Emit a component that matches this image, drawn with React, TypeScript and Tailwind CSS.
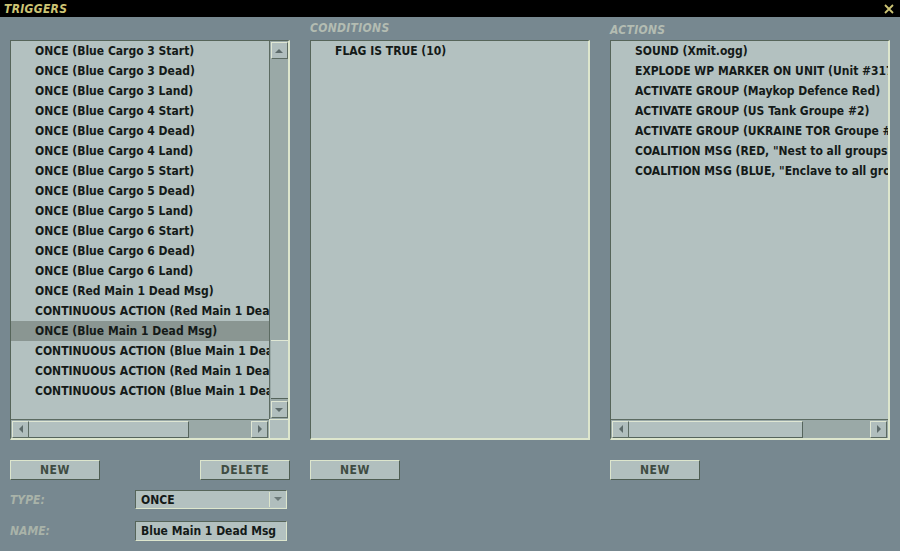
const FONT = { fontFamily: '"DejaVu Sans Condensed", "DejaVu Sans", "Liberation Sans", sans-serif' };

const triggers = [
  "ONCE (Blue Cargo 3 Start)",
  "ONCE (Blue Cargo 3 Dead)",
  "ONCE (Blue Cargo 3 Land)",
  "ONCE (Blue Cargo 4 Start)",
  "ONCE (Blue Cargo 4 Dead)",
  "ONCE (Blue Cargo 4 Land)",
  "ONCE (Blue Cargo 5 Start)",
  "ONCE (Blue Cargo 5 Dead)",
  "ONCE (Blue Cargo 5 Land)",
  "ONCE (Blue Cargo 6 Start)",
  "ONCE (Blue Cargo 6 Dead)",
  "ONCE (Blue Cargo 6 Land)",
  "ONCE (Red Main 1 Dead Msg)",
  "CONTINUOUS ACTION (Red Main 1 Dead)",
  "ONCE (Blue Main 1 Dead Msg)",
  "CONTINUOUS ACTION (Blue Main 1 Dead)",
  "CONTINUOUS ACTION (Red Main 1 Dead)",
  "CONTINUOUS ACTION (Blue Main 1 Dead)",
];

const actions = [
  "SOUND (Xmit.ogg)",
  "EXPLODE WP MARKER ON UNIT (Unit #317)",
  "ACTIVATE GROUP (Maykop Defence Red)",
  "ACTIVATE GROUP (US Tank Groupe #2)",
  "ACTIVATE GROUP (UKRAINE TOR Groupe #1)",
  'COALITION MSG (RED, "Nest to all groups")',
  'COALITION MSG (BLUE, "Enclave to all groups")',
];

function Row({ text, selected }: { text: string; selected?: boolean }) {
  return (
    <div
      className={`h-5 shrink-0 flex items-center pl-6 whitespace-nowrap text-[12px] font-bold text-[#141a18] ${
        selected ? "bg-[#8a9692]" : ""
      }`}
    >
      {text}
    </div>
  );
}

function Arrow({ dir }: { dir: "up" | "down" | "left" | "right" }) {
  const pts = {
    up: "1,6 5,2 9,6",
    down: "1,2 5,6 9,2",
    left: "6,1 2,5 6,9",
    right: "2,1 6,5 2,9",
  }[dir];
  const vertical = dir === "up" || dir === "down";
  return (
    <svg width={vertical ? 10 : 8} height={vertical ? 8 : 10} viewBox={vertical ? "0 0 10 8" : "0 0 8 10"}>
      <polygon points={pts} fill="#5d6b6a" />
    </svg>
  );
}

function ScrollBtn({ dir }: { dir: "up" | "down" | "left" | "right" }) {
  return (
    <div className="w-[17px] h-[17px] shrink-0 flex items-center justify-center bg-[#b0bebd] border border-t-[#dfe7d4] border-l-[#dfe7d4] border-b-[#5c6b62] border-r-[#5c6b62]">
      <Arrow dir={dir} />
    </div>
  );
}

function HScroll({ thumb, track }: { thumb: number; track: number }) {
  return (
    <div className="h-[19px] flex items-center bg-[#9aa9a7] border-t border-[#5c6b62] px-px">
      <ScrollBtn dir="left" />
      <div className="flex-1 h-[17px] flex">
        <div
          className="h-full bg-[#b2c0bf] border-r border-b border-[#55645c] border-t border-t-[#dfe7d4]"
          style={{ width: thumb }}
        />
        <div style={{ width: track }} />
      </div>
      <ScrollBtn dir="right" />
    </div>
  );
}

function Panel({ children }: { children: React.ReactNode }) {
  return (
    <div className="w-[280px] h-[400px] flex flex-col bg-[#b3c1c0] border-t border-l border-[#56655a] border-b-2 border-r-2 border-b-[#dde6cd] border-r-[#dde6cd] overflow-hidden">
      {children}
    </div>
  );
}

function Heading({ text, offset }: { text: string; offset: string }) {
  return (
    <div className={`h-[23px] flex items-center ${offset} text-[12px] font-bold italic text-[#b3bcb2] tracking-[0.3px]`}>
      {text}
    </div>
  );
}

function Button({ text }: { text: string }) {
  return (
    <div className="w-[90px] h-5 flex items-center justify-center bg-[#b1bfbe] border border-t-[#dde6cd] border-l-[#dde6cd] border-b-[#4e5d52] border-r-[#4e5d52] text-[12px] font-bold text-[#3f4c42] tracking-[0.5px]">
      {text}
    </div>
  );
}

export default function App() {
  return (
    <div className="w-[900px] h-[551px] bg-[#778890] flex flex-col overflow-hidden" style={FONT}>
      <div className="h-[17px] bg-black flex items-center justify-between px-1">
        <span className="text-[12px] font-bold italic text-[#cdc474] tracking-[0.3px]">TRIGGERS</span>
        <svg width="10" height="10" viewBox="0 0 10 10" className="mr-0.5">
          <path d="M1 1 L9 9 M9 1 L1 9" stroke="#cdc474" strokeWidth="1.8" />
        </svg>
      </div>

      <div className="flex gap-5 pl-[10px]">
        {/* triggers column */}
        <div className="w-[280px] flex flex-col">
          <div className="h-[23px]" />
          <Panel>
            <div className="flex-1 flex min-h-0">
              <div className="flex-1 flex flex-col overflow-hidden min-w-0">
                {triggers.map((t, i) => (
                  <Row key={i} text={t} selected={i === 14} />
                ))}
              </div>
              <div className="w-[19px] flex flex-col bg-[#9aa9a7] border-l border-[#5c6b62] py-px items-center">
                <ScrollBtn dir="up" />
                <div className="flex-1 w-[17px] flex flex-col">
                  <div className="h-[281px]" />
                  <div className="h-[59px] bg-[#b2c0bf] border-t border-t-[#dfe7d4] border-b border-b-[#55645c]" />
                </div>
                <ScrollBtn dir="down" />
              </div>
            </div>
            <div className="flex">
              <div className="flex-1">
                <HScroll thumb={160} track={60} />
              </div>
              <div className="w-[19px] h-[19px] bg-[#b0bebd] border-t border-l border-[#dfe7d4]" />
            </div>
          </Panel>
          <div className="flex justify-between mt-5">
            <Button text="NEW" />
            <Button text="DELETE" />
          </div>
          <div className="flex items-center mt-[10px] h-[19px]">
            <span className="w-[125px] text-[12px] font-bold italic text-[#a9b3a9]">TYPE:</span>
            <div className="w-[152px] h-[19px] flex items-center justify-between bg-[#b3c1c0] border-t border-l border-[#56655a] border-b border-r border-b-[#dde6cd] border-r-[#dde6cd] pl-[5px] pr-px">
              <span className="text-[12px] font-bold text-[#141a18]">ONCE</span>
              <div className="w-[16px] h-[15px] flex items-center justify-center border-l border-[#dde6cd] bg-[#b0bebd]">
                <svg width="8" height="5" viewBox="0 0 8 5">
                  <polygon points="0,0 8,0 4,4" fill="#6b7978" />
                </svg>
              </div>
            </div>
          </div>
          <div className="flex items-center mt-[12px] h-5">
            <span className="w-[125px] text-[12px] font-bold italic text-[#a9b3a9]">NAME:</span>
            <div className="w-[152px] h-5 flex items-center bg-[#b3c1c0] border-t border-l border-[#56655a] border-b border-r border-b-[#dde6cd] border-r-[#dde6cd] pl-[5px]">
              <span className="text-[12px] font-bold text-[#141a18] whitespace-nowrap">Blue Main 1 Dead Msg</span>
            </div>
          </div>
        </div>

        {/* conditions column */}
        <div className="w-[280px] flex flex-col">
          <Heading text="CONDITIONS" offset="-translate-y-px" />
          <Panel>
            <Row text="FLAG IS TRUE (10)" />
          </Panel>
          <div className="mt-5">
            <Button text="NEW" />
          </div>
        </div>

        {/* actions column */}
        <div className="w-[280px] flex flex-col">
          <Heading text="ACTIONS" offset="translate-y-px" />
          <Panel>
            <div className="flex-1 flex flex-col overflow-hidden">
              {actions.map((a, i) => (
                <Row key={i} text={a} />
              ))}
            </div>
            <HScroll thumb={174} track={67} />
          </Panel>
          <div className="mt-5">
            <Button text="NEW" />
          </div>
        </div>
      </div>
    </div>
  );
}
